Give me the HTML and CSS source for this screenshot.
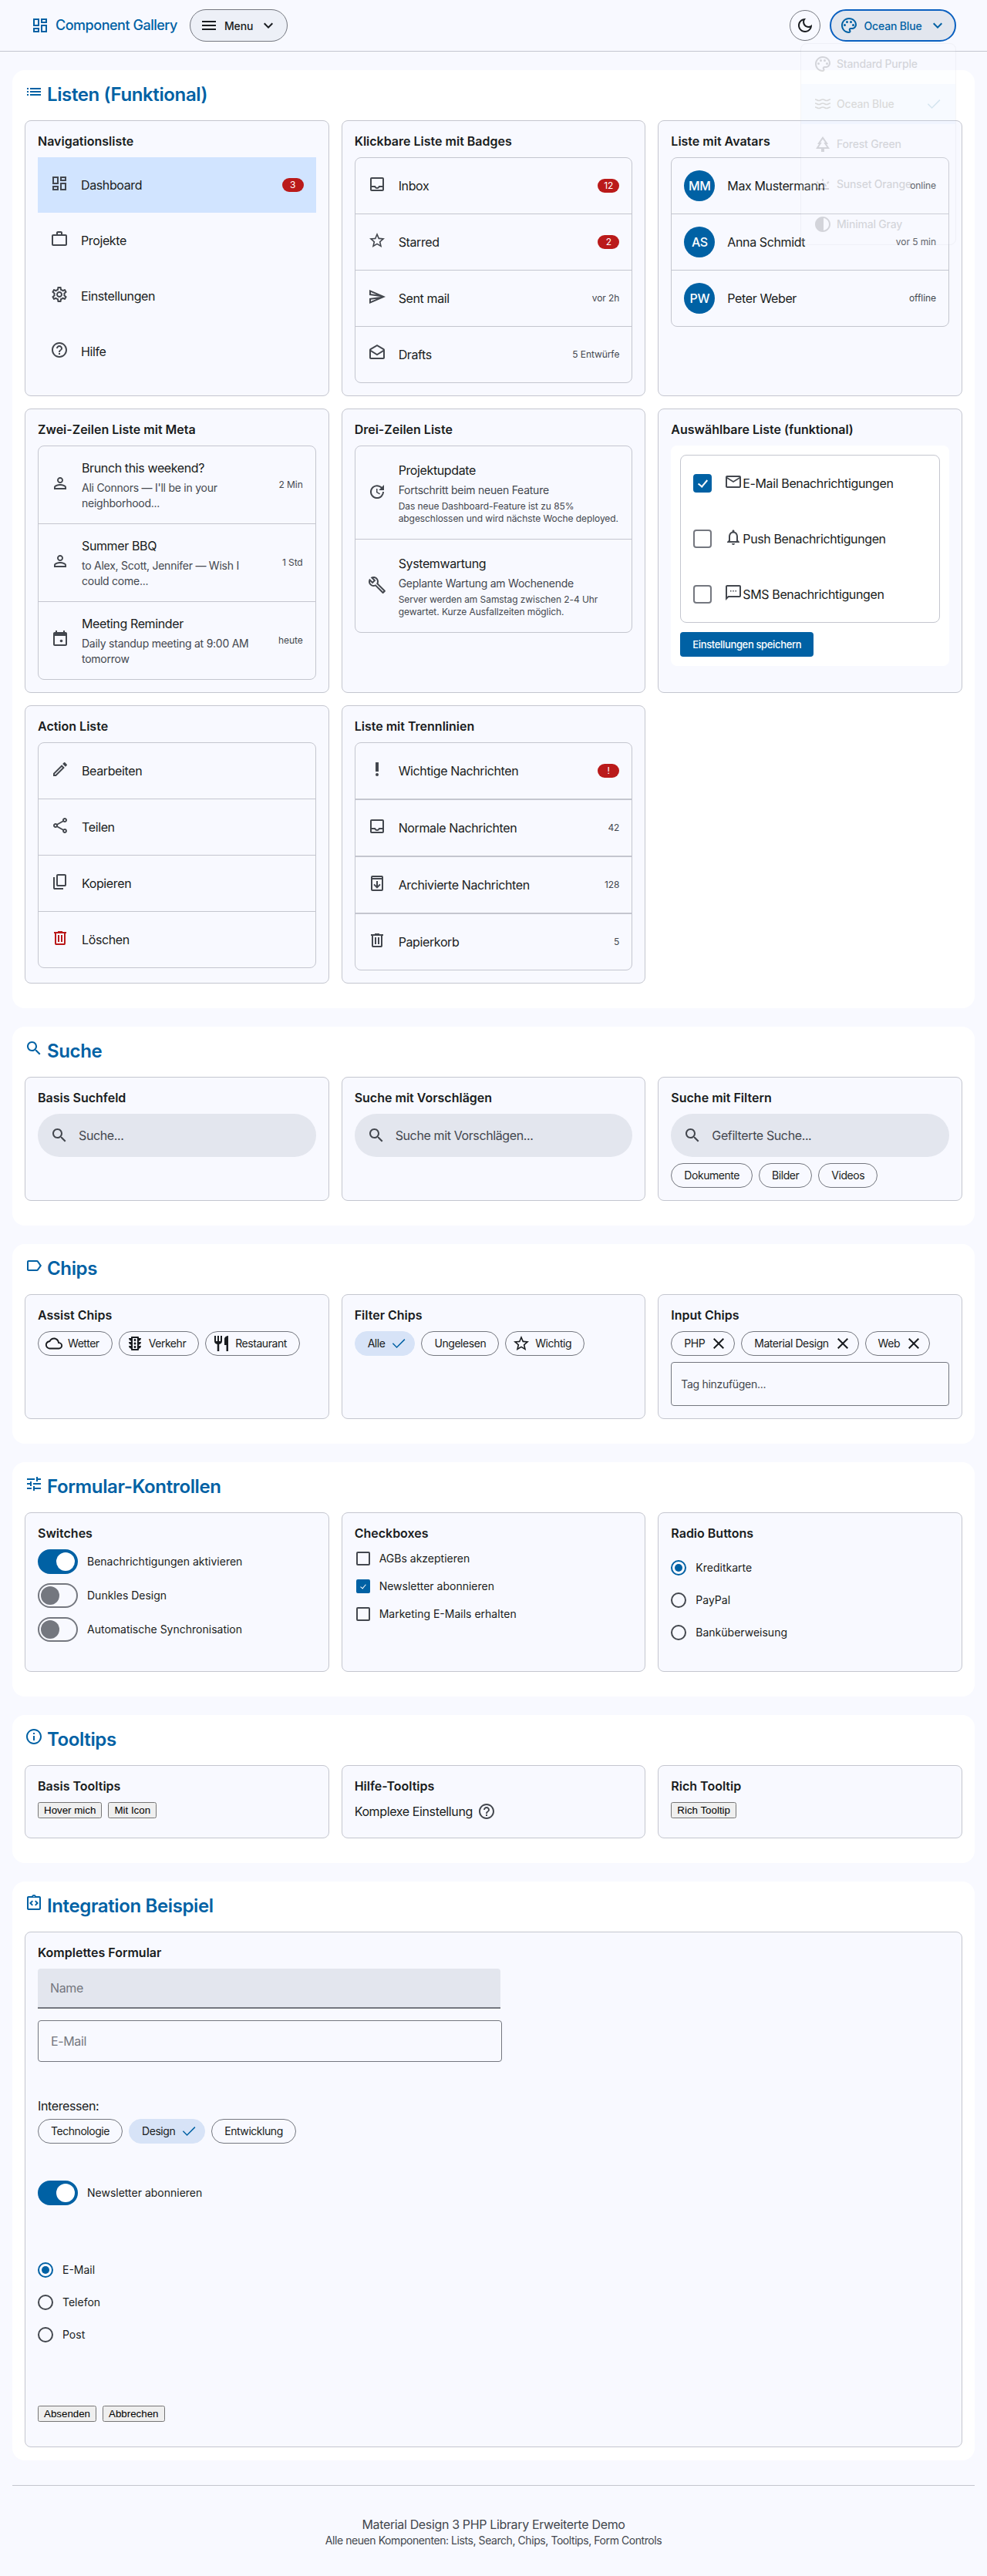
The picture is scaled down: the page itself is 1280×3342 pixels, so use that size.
FILE: index.html
```html
<!DOCTYPE html>
<html lang="de">
<head>
    <meta charset="UTF-8">
    <meta name="viewport" content="width=device-width, initial-scale=1.0">
    <title>Component Gallery</title>
    <link rel="stylesheet" href="styles.css">
</head>
<body>

    <!-- Icon sprite -->
    <svg class="sprite" xmlns="http://www.w3.org/2000/svg">
        <symbol id="i-dashboard" viewBox="0 0 24 24"><path d="M19 5v2h-4V5h4M9 5v6H5V5h4m10 8v6h-4v-6h4M9 17v2H5v-2h4M21 3h-8v6h8V3zM11 3H3v10h8V3zm10 8h-8v10h8V11zm-10 4H3v6h8v-6z"/></symbol>
        <symbol id="i-menu" viewBox="0 0 24 24"><path d="M3 18h18v-2H3v2zm0-5h18v-2H3v2zm0-7v2h18V6H3z"/></symbol>
        <symbol id="i-chevron" viewBox="0 0 24 24"><path d="M16.59 8.59L12 13.17 7.41 8.59 6 10l6 6 6-6z"/></symbol>
        <symbol id="i-moon" viewBox="0 0 24 24"><path d="M9.37 5.51C9.19 6.15 9.1 6.82 9.1 7.5c0 4.08 3.32 7.4 7.4 7.4.68 0 1.35-.09 1.99-.27C17.45 17.19 14.93 19 12 19c-3.86 0-7-3.14-7-7 0-2.93 1.81-5.45 4.37-6.49zM12 3c-4.97 0-9 4.03-9 9s4.03 9 9 9 9-4.03 9-9c0-.46-.04-.92-.1-1.36-.98 1.37-2.58 2.26-4.4 2.26-2.98 0-5.4-2.42-5.4-5.4 0-1.81.89-3.42 2.26-4.4-.44-.06-.9-.1-1.36-.1z"/></symbol>
        <symbol id="i-palette" viewBox="0 0 24 24"><path d="M12 22C6.49 22 2 17.51 2 12S6.49 2 12 2s10 4.04 10 9c0 3.31-2.69 6-6 6h-1.77c-.28 0-.5.22-.5.5 0 .12.05.23.13.33.41.47.64 1.06.64 1.67 0 1.38-1.12 2.5-2.5 2.5zm0-18c-4.41 0-8 3.59-8 8s3.59 8 8 8c.28 0 .5-.22.5-.5 0-.16-.08-.28-.14-.35-.41-.46-.63-1.05-.63-1.65 0-1.38 1.12-2.5 2.5-2.5H16c2.21 0 4-1.79 4-4 0-3.86-3.59-7-8-7z"/><circle cx="6.5" cy="11.5" r="1.5"/><circle cx="9.5" cy="7.5" r="1.5"/><circle cx="14.5" cy="7.5" r="1.5"/><circle cx="17.5" cy="11.5" r="1.5"/></symbol>
        <symbol id="i-waves" viewBox="0 0 24 24"><path d="M2 6c2.5 0 2.5 1.5 5 1.5S9.5 6 12 6s2.5 1.5 5 1.5S19.5 6 22 6M2 11c2.5 0 2.5 1.5 5 1.5S9.5 11 12 11s2.5 1.5 5 1.5 2.5-1.5 5-1.5M2 16c2.5 0 2.5 1.5 5 1.5S9.5 16 12 16s2.5 1.5 5 1.5 2.5-1.5 5-1.5" fill="none" stroke="currentColor" stroke-width="1.6"/></symbol>
        <symbol id="i-park" viewBox="0 0 24 24"><path d="M17 12h2L12 2 5.05 12H7l-3.9 6h6.92v4h3.95v-4H21l-4-6zM6.79 16l3.9-6H8.88l3.13-4.5 3.11 4.5h-1.86l4 6H6.79z"/></symbol>
        <symbol id="i-twilight" viewBox="0 0 24 24"><path d="M16.95 10.23l1.41 1.41 2.12-2.12-1.41-1.41zM4 17h16v2H4zM11 5h2v3h-2zM3.52 9.52l2.12 2.12 1.41-1.41-2.12-2.12zM12 10a5 5 0 0 0-5 5h2a3 3 0 0 1 6 0h2a5 5 0 0 0-5-5z"/></symbol>
        <symbol id="i-contrast" viewBox="0 0 24 24"><path d="M12 22c5.52 0 10-4.48 10-10S17.52 2 12 2 2 6.48 2 12s4.48 10 10 10zm1-17.93c3.94.49 7 3.85 7 7.93s-3.05 7.44-7 7.93V4.07z"/></symbol>
        <symbol id="i-check" viewBox="0 0 24 24"><path d="M9.55 18l-5.7-5.7 1.05-1.05 4.65 4.65 9.8-9.8 1.05 1.05z"/></symbol>
        <symbol id="i-inbox" viewBox="0 0 24 24"><path d="M19 3H5c-1.1 0-2 .9-2 2v14c0 1.1.9 2 2 2h14c1.1 0 2-.9 2-2V5c0-1.1-.9-2-2-2zm0 16H5v-3h3.56c.69 1.19 1.97 2 3.45 2s2.75-.81 3.45-2H19v3zm0-5h-4.99c0 1.1-.9 2-2 2s-2-.9-2-2H5V5h14v9z"/></symbol>
        <symbol id="i-star" viewBox="0 0 24 24"><path d="M22 9.24l-7.19-.62L12 2 9.19 8.63 2 9.24l5.46 4.73L5.82 21 12 17.27 18.18 21l-1.63-7.03L22 9.24zM12 15.4l-3.76 2.27 1-4.28-3.32-2.88 4.38-.38L12 6.1l1.71 4.04 4.38.38-3.32 2.88 1 4.28L12 15.4z"/></symbol>
        <symbol id="i-send" viewBox="0 0 24 24"><path d="M4.01 6.03l7.51 3.22-7.52-1 .01-2.22m7.5 8.72L4 17.97v-2.22l7.51-1M2.01 3L2 10l15 2-15 2 .01 7L23 12 2.01 3z"/></symbol>
        <symbol id="i-drafts" viewBox="0 0 24 24"><path d="M21.99 8c0-.72-.37-1.35-.94-1.7L12 1 2.95 6.3C2.38 6.65 2 7.28 2 8v10c0 1.1.9 2 2 2h16c1.1 0 2-.9 2-2l-.01-10zM12 3.32L19.99 8v.01L12 13 4 8l8-4.68zM4 18v-7.66l8 5.02 7.99-4.99L20 18H4z"/></symbol>
        <symbol id="i-work" viewBox="0 0 24 24"><path d="M20 6h-4V4c0-1.11-.89-2-2-2h-4c-1.11 0-2 .89-2 2v2H4c-1.11 0-1.99.89-1.99 2L2 19c0 1.11.89 2 2 2h16c1.11 0 2-.89 2-2V8c0-1.11-.89-2-2-2zm-6 0h-4V4h4v2zm6 13H4V8h16v11z"/></symbol>
        <symbol id="i-settings" viewBox="0 0 24 24"><path d="M19.43 12.98c.04-.32.07-.64.07-.98 0-.34-.03-.66-.07-.98l2.11-1.65c.19-.15.24-.42.12-.64l-2-3.46c-.09-.16-.26-.25-.44-.25-.06 0-.12.01-.17.03l-2.49 1c-.52-.4-1.08-.73-1.69-.98l-.38-2.65C14.46 2.18 14.25 2 14 2h-4c-.25 0-.46.18-.49.42l-.38 2.65c-.61.25-1.17.59-1.69.98l-2.49-1c-.06-.02-.12-.03-.18-.03-.17 0-.34.09-.43.25l-2 3.46c-.13.22-.07.49.12.64l2.11 1.65c-.04.32-.07.65-.07.98 0 .33.03.66.07.98l-2.11 1.65c-.19.15-.24.42-.12.64l2 3.46c.09.16.26.25.44.25.06 0 .12-.01.17-.03l2.49-1c.52.4 1.08.73 1.69.98l.38 2.65c.03.24.24.42.49.42h4c.25 0 .46-.18.49-.42l.38-2.65c.61-.25 1.17-.59 1.69-.98l2.49 1c.06.02.12.03.18.03.17 0 .34-.09.43-.25l2-3.46c.12-.22.07-.49-.12-.64l-2.11-1.65zm-1.98-1.71c.04.31.05.52.05.73 0 .21-.02.43-.05.73l-.14 1.13.89.7 1.08.84-.7 1.21-1.27-.51-1.04-.42-.9.68c-.43.32-.84.56-1.25.73l-1.06.43-.16 1.13-.2 1.35h-1.4l-.19-1.35-.16-1.13-1.06-.43c-.43-.18-.83-.41-1.23-.71l-.91-.7-1.06.43-1.27.51-.7-1.21 1.08-.84.89-.7-.14-1.13c-.03-.31-.05-.54-.05-.74s.02-.43.05-.73l.14-1.13-.89-.7-1.08-.84.7-1.21 1.27.51 1.04.42.9-.68c.43-.32.84-.56 1.25-.73l1.06-.43.16-1.13.2-1.35h1.39l.19 1.35.16 1.13 1.06.43c.43.18.83.41 1.23.71l.91.7 1.06-.43 1.27-.51.7 1.21-1.07.85-.89.7.14 1.13zM12 8c-2.21 0-4 1.79-4 4s1.79 4 4 4 4-1.79 4-4-1.79-4-4-4zm0 6c-1.1 0-2-.9-2-2s.9-2 2-2 2 .9 2 2-.9 2-2 2z"/></symbol>
        <symbol id="i-help" viewBox="0 0 24 24"><path d="M11 18h2v-2h-2v2zm1-16C6.48 2 2 6.48 2 12s4.48 10 10 10 10-4.48 10-10S17.52 2 12 2zm0 18c-4.41 0-8-3.59-8-8s3.59-8 8-8 8 3.59 8 8-3.59 8-8 8zm0-14c-2.21 0-4 1.79-4 4h2c0-1.1.9-2 2-2s2 .9 2 2c0 2-3 1.75-3 5h2c0-2.25 3-2.5 3-5 0-2.21-1.79-4-4-4z"/></symbol>
        <symbol id="i-person" viewBox="0 0 24 24"><path d="M12 5.9c1.16 0 2.1.94 2.1 2.1s-.94 2.1-2.1 2.1S9.9 9.16 9.9 8s.94-2.1 2.1-2.1m0 9c2.97 0 6.1 1.46 6.1 2.1v1.1H5.9V17c0-.64 3.13-2.1 6.1-2.1M12 4C9.79 4 8 5.79 8 8s1.79 4 4 4 4-1.79 4-4-1.79-4-4-4zm0 9c-2.67 0-8 1.34-8 4v3h16v-3c0-2.66-5.33-4-8-4z"/></symbol>
        <symbol id="i-event" viewBox="0 0 24 24"><path d="M16 1v2H8V1H6v2H5c-1.11 0-1.99.9-1.99 2L3 19c0 1.1.89 2 2 2h14c1.1 0 2-.9 2-2V5c0-1.1-.9-2-2-2h-1V1h-2zm3 18H5V8h14v11z"/><circle cx="13.5" cy="14.5" r="1.8"/></symbol>
        <symbol id="i-update" viewBox="0 0 24 24"><path d="M21 10.12h-6.78l2.74-2.82c-2.73-2.7-7.15-2.8-9.88-.1-2.73 2.71-2.73 7.08 0 9.79s7.15 2.71 9.88 0C18.32 15.65 19 14.08 19 12.1h2c0 1.98-.88 4.55-2.64 6.29-3.51 3.48-9.21 3.48-12.72 0-3.5-3.47-3.53-9.11-.02-12.58s9.14-3.47 12.65 0L21 3v7.12zM12.5 8v4.25l3.5 2.08-.72 1.21L11 13V8h1.5z"/></symbol>
        <symbol id="i-build" viewBox="0 0 24 24"><path d="M22.61 18.99l-9.08-9.08c.93-2.34.45-5.1-1.44-7C9.79.61 6.21.4 3.66 2.25L7.5 6.1 6.08 7.5 2.25 3.66C.4 6.21.61 9.79 2.91 12.09c1.86 1.86 4.57 2.35 6.89 1.48l9.11 9.11c.39.39 1.02.39 1.41 0l2.3-2.3c.4-.38.4-1.01-.01-1.39zm-3 1.6l-9.46-9.46c-.61.45-1.29.72-2 .82-1.36.2-2.79-.21-3.83-1.25C3.37 9.76 2.93 8.5 3 7.26l3.09 3.09 4.24-4.24-3.09-3.09c1.24-.07 2.49.37 3.44 1.31 1.08 1.08 1.49 2.57 1.24 3.96-.12.71-.42 1.37-.88 1.96l9.45 9.45-.88.88z"/></symbol>
        <symbol id="i-mail" viewBox="0 0 24 24"><path d="M22 6c0-1.1-.9-2-2-2H4c-1.1 0-2 .9-2 2v12c0 1.1.9 2 2 2h16c1.1 0 2-.9 2-2V6zm-2 0l-8 5-8-5h16zm0 12H4V8l8 5 8-5v10z"/></symbol>
        <symbol id="i-bell" viewBox="0 0 24 24"><path d="M12 22c1.1 0 2-.9 2-2h-4c0 1.1.9 2 2 2zm6-6v-5c0-3.07-1.63-5.64-4.5-6.32V4c0-.83-.67-1.5-1.5-1.5s-1.5.67-1.5 1.5v.68C7.64 5.36 6 7.92 6 11v5l-2 2v1h16v-1l-2-2zm-2 1H8v-6c0-2.48 1.51-4.5 4-4.5s4 2.02 4 4.5v6z"/></symbol>
        <symbol id="i-sms" viewBox="0 0 24 24"><path d="M20 2H4c-1.1 0-1.99.9-1.99 2L2 22l4-4h14c1.1 0 2-.9 2-2V4c0-1.1-.9-2-2-2zm0 14H5.17L4 17.17V4h16v12zM8 9h1.5v1.5H8zm6.5 0H16v1.5h-1.5zm-3.25 0h1.5v1.5h-1.5z"/></symbol>
        <symbol id="i-edit" viewBox="0 0 24 24"><path d="M14.06 9.02l.92.92L5.92 19H5v-.92l9.06-9.06M17.66 3c-.25 0-.51.1-.7.29l-1.83 1.83 3.75 3.75 1.83-1.83c.39-.39.39-1.02 0-1.41l-2.34-2.34c-.2-.2-.45-.29-.71-.29zm-3.6 3.19L3 17.25V21h3.75L17.81 9.94l-3.75-3.75z"/></symbol>
        <symbol id="i-share" viewBox="0 0 24 24"><path d="M18 16.08c-.76 0-1.44.3-1.96.77L8.91 12.7c.05-.23.09-.46.09-.7s-.04-.47-.09-.7l7.05-4.11c.54.5 1.25.81 2.04.81 1.66 0 3-1.34 3-3s-1.34-3-3-3-3 1.34-3 3c0 .24.04.47.09.7L8.04 9.81C7.5 9.31 6.79 9 6 9c-1.66 0-3 1.34-3 3s1.34 3 3 3c.79 0 1.5-.31 2.04-.81l7.12 4.16c-.05.21-.08.43-.08.65 0 1.61 1.31 2.92 2.92 2.92s2.92-1.31 2.92-2.92-1.31-2.92-2.92-2.92zM18 4c.55 0 1 .45 1 1s-.45 1-1 1-1-.45-1-1 .45-1 1-1zM6 13c-.55 0-1-.45-1-1s.45-1 1-1 1 .45 1 1-.45 1-1 1zm12 7.02c-.55 0-1-.45-1-1s.45-1 1-1 1 .45 1 1-.45 1-1 1z"/></symbol>
        <symbol id="i-copy" viewBox="0 0 24 24"><path d="M9 18q-.825 0-1.412-.587Q7 16.825 7 16V4q0-.825.588-1.413Q8.175 2 9 2h9q.825 0 1.413.587Q20 3.175 20 4v12q0 .825-.587 1.413Q18.825 18 18 18zm0-2h9V4H9zm-4 6q-.825 0-1.412-.587Q3 20.825 3 20V6h2v14h11v2z"/></symbol>
        <symbol id="i-delete" viewBox="0 0 24 24"><path d="M7 21q-.825 0-1.412-.587Q5 19.825 5 19V6H4V4h5V3h6v1h5v2h-1v13q0 .825-.587 1.413Q17.825 21 17 21ZM17 6H7v13h10ZM9 17h2V8H9Zm4 0h2V8h-2Z"/></symbol>
        <symbol id="i-priority" viewBox="0 0 24 24"><circle cx="12" cy="19" r="2"/><path d="M10 3h4v12h-4z"/></symbol>
        <symbol id="i-archive" viewBox="0 0 24 24"><path d="M6 2h12q2 0 2 2v16q0 2-2 2H6q-2 0-2-2V4q0-2 2-2zm0 2v1h12V4zm0 3v13h12V7zm5 2h2v6l2.3-2.3 1.4 1.4L12 18.8l-4.7-4.7 1.4-1.4L11 15z"/></symbol>
        <symbol id="i-search" viewBox="0 0 24 24"><path d="M15.5 14h-.79l-.28-.27C15.41 12.59 16 11.11 16 9.5 16 5.91 13.09 3 9.5 3S3 5.91 3 9.5 5.91 16 9.5 16c1.61 0 3.09-.59 4.23-1.57l.27.28v.79l5 4.99L20.49 19l-4.99-5zm-6 0C7.01 14 5 11.99 5 9.5S7.01 5 9.5 5 14 7.01 14 9.5 11.99 14 9.5 14z"/></symbol>
        <symbol id="i-label" viewBox="0 0 24 24"><path d="M17.63 5.84C17.27 5.33 16.67 5 16 5L5 5.01C3.9 5.01 3 5.9 3 7v10c0 1.1.9 1.99 2 1.99L16 19c.67 0 1.27-.33 1.63-.84L22 12l-4.37-6.16zM16 17H5V7h11l3.55 5L16 17z"/></symbol>
        <symbol id="i-tune" viewBox="0 0 24 24"><path d="M3 17v2h6v-2H3zM3 5v2h10V5H3zm10 16v-2h8v-2h-8v-2h-2v6h2zM7 9v2H3v2h4v2h2V9H7zm14 4v-2H11v2h10zm-6-4h2V7h4V5h-4V3h-2v6z"/></symbol>
        <symbol id="i-list" viewBox="0 0 24 24"><path d="M3 13h2v-2H3v2zm0 4h2v-2H3v2zm0-8h2V7H3v2zm4 4h14v-2H7v2zm0 4h14v-2H7v2zM7 7v2h14V7H7z"/></symbol>
        <symbol id="i-info" viewBox="0 0 24 24"><path d="M11 7h2v2h-2zm0 4h2v6h-2zm1-9C6.48 2 2 6.48 2 12s4.48 10 10 10 10-4.48 10-10S17.52 2 12 2zm0 18c-4.41 0-8-3.59-8-8s3.59-8 8-8 8 3.59 8 8-3.59 8-8 8z"/></symbol>
        <symbol id="i-code" viewBox="0 0 24 24"><path d="M11 14.17L8.83 12 11 9.83 9.59 8.41 6 12l3.59 3.59zM14.41 15.59L18 12l-3.59-3.59L13 9.83 15.17 12 13 14.17zM19 3h-4.18C14.4 1.84 13.3 1 12 1s-2.4.84-2.82 2H5c-.14 0-.27.01-.4.04-.39.08-.74.28-1.01.55-.18.18-.33.4-.43.64-.1.23-.16.49-.16.77v14c0 .27.06.54.16.78s.25.45.43.64c.27.27.62.47 1.01.55.13.02.26.03.4.03h14c1.1 0 2-.9 2-2V5c0-1.1-.9-2-2-2zm-7-.25c.41 0 .75.34.75.75s-.34.75-.75.75-.75-.34-.75-.75.34-.75.75-.75zM19 19H5V5h14v14z"/></symbol>
        <symbol id="i-cloud" viewBox="-1 -1 26 26"><path d="M12 6c2.62 0 4.88 1.86 5.39 4.43l.3 1.5 1.53.11c1.56.1 2.78 1.41 2.78 2.96 0 1.65-1.35 3-3 3H6c-2.21 0-4-1.79-4-4 0-2.05 1.53-3.76 3.56-3.97l1.07-.11.5-.95C8.08 7.14 9.94 6 12 6m0-2C9.11 4 6.6 5.64 5.35 8.04 2.34 8.36 0 10.91 0 14c0 3.31 2.69 6 6 6h13c2.76 0 5-2.24 5-5 0-2.64-2.05-4.78-4.65-4.96C18.67 6.59 15.64 4 12 4z"/></symbol>
        <symbol id="i-traffic" viewBox="0 0 24 24"><path d="M20 10h-3V8.86c1.72-.45 3-2 3-3.86h-3V4c0-.55-.45-1-1-1H8c-.55 0-1 .45-1 1v1H4c0 1.86 1.28 3.41 3 3.86V10H4c0 1.86 1.28 3.41 3 3.86V15H4c0 1.86 1.28 3.41 3 3.86V20c0 .55.45 1 1 1h8c.55 0 1-.45 1-1v-1.14c1.72-.45 3-2 3-3.86h-3v-1.14c1.72-.45 3-2 3-3.86zm-5 9H9V5h6v14zm-3-1c.83 0 1.5-.67 1.5-1.5S12.83 15 12 15s-1.5.67-1.5 1.5.67 1.5 1.5 1.5zm0-4.5c.83 0 1.5-.67 1.5-1.5s-.67-1.5-1.5-1.5-1.5.67-1.5 1.5.67 1.5 1.5 1.5zM12 9c.83 0 1.5-.67 1.5-1.5S12.83 6 12 6s-1.5.67-1.5 1.5S11.17 9 12 9z"/></symbol>
        <symbol id="i-restaurant" viewBox="0 0 24 24"><path d="M11 9H9V2H7v7H5V2H3v7c0 2.12 1.66 3.84 3.75 3.97V22h2.5v-9.03C11.34 12.84 13 11.12 13 9V2h-2v7zm5-3v8h2.5v8H21V2c-2.76 0-5 2.24-5 4z"/></symbol>
        <symbol id="i-close" viewBox="0 0 24 24"><path d="M19 6.41L17.59 5 12 10.59 6.41 5 5 6.41 10.59 12 5 17.59 6.41 19 12 13.41 17.59 19 19 17.59 13.41 12z"/></symbol>
    </svg>

    <header class="topbar">
        <div class="topbar-left">
            <a class="brand" href="#"><svg class="icon"><use href="#i-dashboard"/></svg>Component Gallery</a>
            <button class="pill-btn" type="button">
                <svg class="icon"><use href="#i-menu"/></svg>Menu<svg class="icon"><use href="#i-chevron"/></svg>
            </button>
        </div>
        <div class="topbar-right">
            <button class="round-btn" type="button"><svg class="icon"><use href="#i-moon"/></svg></button>
            <button class="pill-btn theme-btn" type="button">
                <svg class="icon"><use href="#i-palette"/></svg>Ocean Blue<svg class="icon"><use href="#i-chevron"/></svg>
            </button>
            <!-- Theme menu, caught while fading in -->
            <ul class="theme-menu">
                <li><svg class="icon"><use href="#i-palette"/></svg>Standard Purple</li>
                <li class="active"><svg class="icon"><use href="#i-waves"/></svg>Ocean Blue<svg class="icon menu-check"><use href="#i-check"/></svg></li>
                <li><svg class="icon"><use href="#i-park"/></svg>Forest Green</li>
                <li><svg class="icon"><use href="#i-twilight"/></svg>Sunset Orange</li>
                <li><svg class="icon"><use href="#i-contrast"/></svg>Minimal Gray</li>
            </ul>
        </div>
    </header>

    <main>
        <!-- Listen -->
        <section class="section">
            <h2><svg class="icon"><use href="#i-list"/></svg>Listen (Funktional)</h2>
            <div class="grid">
                <div class="card">
                    <h3>Navigationsliste</h3>
                    <ul class="nav-list">
                        <li class="row active"><svg class="icon"><use href="#i-dashboard"/></svg><span>Dashboard</span><span class="badge">3</span></li>
                        <li class="row"><svg class="icon"><use href="#i-work"/></svg><span>Projekte</span></li>
                        <li class="row"><svg class="icon"><use href="#i-settings"/></svg><span>Einstellungen</span></li>
                        <li class="row"><svg class="icon"><use href="#i-help"/></svg><span>Hilfe</span></li>
                    </ul>
                </div>
                <div class="card">
                    <h3>Klickbare Liste mit Badges</h3>
                    <ul class="list">
                        <li class="row"><svg class="icon"><use href="#i-inbox"/></svg><span>Inbox</span><span class="badge">12</span></li>
                        <li class="row"><svg class="icon"><use href="#i-star"/></svg><span>Starred</span><span class="badge">2</span></li>
                        <li class="row"><svg class="icon"><use href="#i-send"/></svg><span>Sent mail</span><span class="meta">vor 2h</span></li>
                        <li class="row"><svg class="icon"><use href="#i-drafts"/></svg><span>Drafts</span><span class="meta">5 Entwürfe</span></li>
                    </ul>
                </div>
                <div class="card">
                    <h3>Liste mit Avatars</h3>
                    <ul class="list">
                        <li class="row"><span class="avatar">MM</span><span>Max Mustermann</span><span class="meta">online</span></li>
                        <li class="row"><span class="avatar">AS</span><span>Anna Schmidt</span><span class="meta">vor 5 min</span></li>
                        <li class="row"><span class="avatar">PW</span><span>Peter Weber</span><span class="meta">offline</span></li>
                    </ul>
                </div>

                <div class="card">
                    <h3>Zwei-Zeilen Liste mit Meta</h3>
                    <ul class="list">
                        <li class="row two-line">
                            <svg class="icon"><use href="#i-person"/></svg>
                            <div class="two-line-text"><div class="line-title">Brunch this weekend?</div><div class="line-sub">Ali Connors — I'll be in your neighborhood...</div></div>
                            <span class="meta">2 Min</span>
                        </li>
                        <li class="row two-line">
                            <svg class="icon"><use href="#i-person"/></svg>
                            <div class="two-line-text"><div class="line-title">Summer BBQ</div><div class="line-sub">to Alex, Scott, Jennifer — Wish I could come...</div></div>
                            <span class="meta">1 Std</span>
                        </li>
                        <li class="row two-line">
                            <svg class="icon"><use href="#i-event"/></svg>
                            <div class="two-line-text"><div class="line-title">Meeting Reminder</div><div class="line-sub">Daily standup meeting at 9:00 AM tomorrow</div></div>
                            <span class="meta">heute</span>
                        </li>
                    </ul>
                </div>
                <div class="card">
                    <h3>Drei-Zeilen Liste</h3>
                    <ul class="list">
                        <li class="row three-line">
                            <svg class="icon"><use href="#i-update"/></svg>
                            <div><div class="line-title">Projektupdate</div><div class="line-sub">Fortschritt beim neuen Feature</div><div class="line-small">Das neue Dashboard-Feature ist zu 85% abgeschlossen und wird nächste Woche deployed.</div></div>
                        </li>
                        <li class="row three-line">
                            <svg class="icon"><use href="#i-build"/></svg>
                            <div><div class="line-title">Systemwartung</div><div class="line-sub">Geplante Wartung am Wochenende</div><div class="line-small">Server werden am Samstag zwischen 2-4 Uhr gewartet. Kurze Ausfallzeiten möglich.</div></div>
                        </li>
                    </ul>
                </div>
                <div class="card">
                    <h3>Auswählbare Liste (funktional)</h3>
                    <form class="select-panel">
                        <ul class="list plain">
                            <li class="row select-row"><input class="box-lg" type="checkbox" checked><svg class="icon"><use href="#i-mail"/></svg><span>E-Mail Benachrichtigungen</span></li>
                            <li class="row select-row"><input class="box-lg" type="checkbox"><svg class="icon"><use href="#i-bell"/></svg><span>Push Benachrichtigungen</span></li>
                            <li class="row select-row"><input class="box-lg" type="checkbox"><svg class="icon"><use href="#i-sms"/></svg><span>SMS Benachrichtigungen</span></li>
                        </ul>
                        <button class="btn-filled" type="button">Einstellungen speichern</button>
                    </form>
                </div>

                <div class="card">
                    <h3>Action Liste</h3>
                    <ul class="list">
                        <li class="row"><svg class="icon"><use href="#i-edit"/></svg><span>Bearbeiten</span></li>
                        <li class="row"><svg class="icon"><use href="#i-share"/></svg><span>Teilen</span></li>
                        <li class="row"><svg class="icon"><use href="#i-copy"/></svg><span>Kopieren</span></li>
                        <li class="row"><svg class="icon danger"><use href="#i-delete"/></svg><span>Löschen</span></li>
                    </ul>
                </div>
                <div class="card">
                    <h3>Liste mit Trennlinien</h3>
                    <ul class="list thick">
                        <li class="row"><svg class="icon"><use href="#i-priority"/></svg><span>Wichtige Nachrichten</span><span class="badge">!</span></li>
                        <li class="row"><svg class="icon"><use href="#i-inbox"/></svg><span>Normale Nachrichten</span><span class="meta">42</span></li>
                        <li class="row"><svg class="icon"><use href="#i-archive"/></svg><span>Archivierte Nachrichten</span><span class="meta">128</span></li>
                        <li class="row"><svg class="icon"><use href="#i-delete"/></svg><span>Papierkorb</span><span class="meta">5</span></li>
                    </ul>
                </div>
            </div>
        </section>

        <!-- Suche -->
        <section class="section">
            <h2><svg class="icon"><use href="#i-search"/></svg>Suche</h2>
            <div class="grid">
                <div class="card">
                    <h3>Basis Suchfeld</h3>
                    <div class="search"><svg class="icon"><use href="#i-search"/></svg><input type="text" placeholder="Suche..."></div>
                </div>
                <div class="card">
                    <h3>Suche mit Vorschlägen</h3>
                    <div class="search"><svg class="icon"><use href="#i-search"/></svg><input type="text" placeholder="Suche mit Vorschlägen..."></div>
                </div>
                <div class="card">
                    <h3>Suche mit Filtern</h3>
                    <div class="search"><svg class="icon"><use href="#i-search"/></svg><input type="text" placeholder="Gefilterte Suche..."></div>
                    <div class="chips after-search">
                        <span class="chip">Dokumente</span>
                        <span class="chip">Bilder</span>
                        <span class="chip">Videos</span>
                    </div>
                </div>
            </div>
        </section>

        <!-- Chips -->
        <section class="section">
            <h2><svg class="icon"><use href="#i-label"/></svg>Chips</h2>
            <div class="grid">
                <div class="card">
                    <h3>Assist Chips</h3>
                    <div class="chips">
                        <span class="chip lead"><svg class="icon"><use href="#i-cloud"/></svg>Wetter</span>
                        <span class="chip lead"><svg class="icon"><use href="#i-traffic"/></svg>Verkehr</span>
                        <span class="chip lead"><svg class="icon"><use href="#i-restaurant"/></svg>Restaurant</span>
                    </div>
                </div>
                <div class="card">
                    <h3>Filter Chips</h3>
                    <div class="chips">
                        <span class="chip trail selected">Alle<svg class="icon"><use href="#i-check"/></svg></span>
                        <span class="chip">Ungelesen</span>
                        <span class="chip lead"><svg class="icon"><use href="#i-star"/></svg>Wichtig</span>
                    </div>
                </div>
                <div class="card">
                    <h3>Input Chips</h3>
                    <div class="chips">
                        <span class="chip trail">PHP<svg class="icon"><use href="#i-close"/></svg></span>
                        <span class="chip trail">Material Design<svg class="icon"><use href="#i-close"/></svg></span>
                        <span class="chip trail">Web<svg class="icon"><use href="#i-close"/></svg></span>
                    </div>
                    <input class="tag-input" type="text" placeholder="Tag hinzufügen...">
                </div>
            </div>
        </section>

        <!-- Formular-Kontrollen -->
        <section class="section">
            <h2><svg class="icon"><use href="#i-tune"/></svg>Formular-Kontrollen</h2>
            <div class="grid">
                <div class="card">
                    <h3>Switches</h3>
                    <div class="switches">
                        <label class="check-row"><input class="switch" type="checkbox" checked>Benachrichtigungen aktivieren</label>
                        <label class="check-row"><input class="switch" type="checkbox">Dunkles Design</label>
                        <label class="check-row"><input class="switch" type="checkbox">Automatische Synchronisation</label>
                    </div>
                </div>
                <div class="card">
                    <h3>Checkboxes</h3>
                    <div class="checkboxes">
                        <label class="check-row"><input class="box" type="checkbox">AGBs akzeptieren</label>
                        <label class="check-row"><input class="box" type="checkbox" checked>Newsletter abonnieren</label>
                        <label class="check-row"><input class="box" type="checkbox">Marketing E-Mails erhalten</label>
                    </div>
                </div>
                <div class="card">
                    <h3>Radio Buttons</h3>
                    <div class="radios">
                        <label class="check-row"><input class="radio" type="radio" name="pay" checked>Kreditkarte</label>
                        <label class="check-row"><input class="radio" type="radio" name="pay">PayPal</label>
                        <label class="check-row"><input class="radio" type="radio" name="pay">Banküberweisung</label>
                    </div>
                </div>
            </div>
        </section>

        <!-- Tooltips -->
        <section class="section">
            <h2><svg class="icon"><use href="#i-info"/></svg>Tooltips</h2>
            <div class="grid">
                <div class="card">
                    <h3>Basis Tooltips</h3>
                    <div class="native-btns tip-row">
                        <button type="button">Hover mich</button>
                        <button type="button">Mit Icon</button>
                    </div>
                </div>
                <div class="card">
                    <h3>Hilfe-Tooltips</h3>
                    <div class="help-row">Komplexe Einstellung<svg class="icon"><use href="#i-help"/></svg></div>
                </div>
                <div class="card">
                    <h3>Rich Tooltip</h3>
                    <div class="native-btns tip-row">
                        <button type="button">Rich Tooltip</button>
                    </div>
                </div>
            </div>
        </section>

        <!-- Integration -->
        <section class="section last">
            <h2><svg class="icon"><use href="#i-code"/></svg>Integration Beispiel</h2>
            <div class="card">
                <h3>Komplettes Formular</h3>
                <input class="field-filled" type="text" placeholder="Name">
                <input class="field-outlined" type="email" placeholder="E-Mail">
                <div class="interest-label">Interessen:</div>
                <div class="chips">
                    <span class="chip">Technologie</span>
                    <span class="chip trail selected">Design<svg class="icon"><use href="#i-check"/></svg></span>
                    <span class="chip">Entwicklung</span>
                </div>
                <label class="check-row form-switch"><input class="switch" type="checkbox" checked>Newsletter abonnieren</label>
                <div class="radios form-radios">
                    <label class="check-row"><input class="radio" type="radio" name="contact" checked>E-Mail</label>
                    <label class="check-row"><input class="radio" type="radio" name="contact">Telefon</label>
                    <label class="check-row"><input class="radio" type="radio" name="contact">Post</label>
                </div>
                <div class="native-btns form-btns">
                    <button type="button">Absenden</button>
                    <button type="button">Abbrechen</button>
                </div>
            </div>
        </section>
    </main>

    <footer class="footer">
        <p>Material Design 3 PHP Library Erweiterte Demo</p>
        <p class="small">Alle neuen Komponenten: Lists, Search, Chips, Tooltips, Form Controls</p>
    </footer>

</body>
</html>
```

FILE: styles.css
```css
* {
    box-sizing: border-box;
}
body {
    margin: 0;
    background-color: #f8f9ff;
    color: #191c20;
    font-family: Inter, "Liberation Sans", sans-serif;
    font-size: 16px;
    line-height: 24px;
    letter-spacing: -0.38px;
}
ul {
    list-style: none;
    margin: 0;
    padding: 0;
}
.sprite {
    display: none;
}
.icon {
    width: 24px;
    height: 24px;
    flex: none;
    fill: currentColor;
}

/* Top bar */
.topbar {
    display: flex;
    justify-content: space-between;
    align-items: center;
    height: 67px;
    padding: 0 40px;
    border-bottom: 1px solid #c4c6cf;
}
.topbar-left, .topbar-right {
    display: flex;
    align-items: center;
}
.topbar-left {
    gap: 16px;
}
.topbar-right {
    position: relative;
    gap: 12px;
}
.brand {
    display: flex;
    align-items: center;
    gap: 8px;
    color: #0061a4;
    font-size: 18px;
    font-weight: 500;
    letter-spacing: -0.48px;
    text-decoration: none;
}
.pill-btn {
    display: flex;
    align-items: center;
    gap: 8px;
    height: 42px;
    padding: 0 12px;
    border: 1px solid #74777f;
    border-radius: 21px;
    background-color: #edf0f7;
    color: #191c20;
    font-family: inherit;
    font-size: 14px;
    font-weight: 500;
    letter-spacing: -0.17px;
}
.theme-btn {
    padding: 0 10.5px;
    border: 2px solid #0a60c0;
    background-color: #e2e6ee;
    color: #0061a4;
}
.round-btn {
    display: flex;
    align-items: center;
    justify-content: center;
    width: 40px;
    height: 40px;
    padding: 0;
    border: 1px solid #74777f;
    border-radius: 50%;
    background: none;
    color: #191c20;
}
.theme-menu {
    position: absolute;
    top: 44px;
    right: 0;
    z-index: 10;
    width: 202px;
    border: 1px solid #c4c6cf;
    border-radius: 8px;
    background-color: #f8f9ff;
    font-size: 14px;
    font-weight: 500;
    letter-spacing: -0.2px;
    opacity: 0.16;
}
.theme-menu li {
    display: flex;
    align-items: center;
    gap: 6px;
    height: 52px;
    padding: 0 16px;
}
.theme-menu li.active {
    background-color: #d1e4ff;
}
.menu-check {
    margin-left: auto;
    color: #0061a4;
}

/* Sections */
.section {
    margin: 24px 16px;
    padding: 16px 16px 32px;
    border-radius: 16px;
    background-color: #fff;
}
.section.last {
    padding-bottom: 17px;
}
.section h2 {
    height: 30px;
    margin: 0 0 19px;
    color: #0061a4;
    font-size: 24px;
    font-weight: 600;
    line-height: 30px;
    letter-spacing: -0.37px;
}
.section h2 .icon {
    margin-right: 5px;
}
.grid {
    display: grid;
    grid-template-columns: repeat(3, 1fr);
    gap: 16px;
}
.card {
    padding: 16px;
    border: 1px solid #c4c6cf;
    border-radius: 8px;
    background-color: #f8f9ff;
}
.card h3 {
    margin: 0 0 11px;
    font-size: 16px;
    font-weight: 600;
    line-height: 20px;
    letter-spacing: 0;
}

/* Lists */
.list {
    border: 1px solid #c4c6cf;
    border-radius: 8px;
}
.list .row + .row {
    border-top: 1px solid #c4c6cf;
}
.list.thick .row + .row {
    border-top-width: 2px;
}
.list.plain .row + .row {
    border-top: 0;
}
.row {
    box-sizing: content-box;
    display: flex;
    align-items: center;
    gap: 16px;
    min-height: 72px;
    padding: 0 16px;
}
.row .icon {
    margin-bottom: 4px;
    color: #43474e;
}
.row .icon.danger {
    color: #ba1a1a;
}
.nav-list .row.active {
    background-color: #d1e4ff;
}
.badge {
    min-width: 28px;
    height: 18px;
    margin-left: auto;
    border-radius: 9px;
    background-color: #ba1a1a;
    color: #fff;
    font-size: 12px;
    line-height: 18px;
    letter-spacing: 0;
    text-align: center;
}
.meta {
    flex: none;
    margin-left: auto;
    color: #43474e;
    font-size: 12px;
    line-height: 16px;
    letter-spacing: -0.07px;
}
.avatar {
    width: 40px;
    height: 40px;
    border-radius: 50%;
    background-color: #0061a4;
    color: #fff;
    font-weight: 500;
    line-height: 40px;
    text-align: center;
}
.two-line {
    min-height: 0;
    padding-top: 16px;
    padding-bottom: 16px;
}
.two-line-text {
    max-width: 236px;
}
.three-line {
    min-height: 0;
    padding-top: 19px;
    padding-bottom: 18px;
}
.line-sub {
    margin-top: 4px;
    color: #43474e;
    font-size: 14px;
    line-height: 20px;
    letter-spacing: -0.25px;
}
.line-small {
    margin-top: 3px;
    color: #43474e;
    font-size: 12px;
    line-height: 16px;
    letter-spacing: -0.07px;
}
.select-panel {
    padding: 12px;
    border-radius: 8px;
    background-color: #fff;
}
.select-row {
    gap: 0;
}
.select-row .box-lg {
    margin-right: 16px;
}
.box-lg {
    display: grid;
    place-items: center;
    flex: none;
    appearance: none;
    width: 24px;
    height: 24px;
    margin: 0;
    border: 2px solid #74777f;
    border-radius: 4px;
}
.box-lg:checked {
    border-color: #0061a4;
    background-color: #0061a4;
}
.box-lg:checked::after {
    content: "";
    width: 5px;
    height: 10px;
    margin-top: -2px;
    border: solid #fff;
    border-width: 0 2px 2px 0;
    transform: rotate(40deg);
}
.btn-filled {
    display: block;
    height: 32px;
    margin-top: 12px;
    padding: 0 16px;
    border: 0;
    border-radius: 4px;
    background-color: #0061a4;
    color: #fff;
    font-family: inherit;
    font-size: 13px;
    font-weight: 500;
    letter-spacing: -0.35px;
}

/* Search */
.search {
    display: flex;
    align-items: center;
    gap: 13px;
    height: 56px;
    padding: 0 16px;
    border-radius: 28px;
    background-color: #e3e6ee;
}
.search .icon {
    color: #43474e;
}
.search input {
    flex: 1;
    min-width: 0;
    padding: 0;
    border: 0;
    outline: 0;
    background: none;
    font-family: inherit;
    font-size: 16px;
    letter-spacing: inherit;
}
.search input::placeholder, .tag-input::placeholder {
    color: #43474e;
    opacity: 1;
}

/* Chips */
.chips {
    display: flex;
    flex-wrap: wrap;
    gap: 8px;
}
.chips.after-search {
    margin-top: 8px;
}
.chip {
    display: inline-flex;
    align-items: center;
    gap: 6px;
    height: 32px;
    padding: 0 16px;
    border: 1px solid #74777f;
    border-radius: 16px;
    font-size: 14px;
    letter-spacing: -0.45px;
}
.chip.lead {
    padding-left: 8px;
}
.chip.trail {
    padding-right: 8px;
}
.chip.selected {
    border-color: #d7e3f7;
    background-color: #d7e3f7;
}
.chip.selected .icon {
    color: #0061a4;
}
.tag-input {
    display: block;
    width: 100%;
    height: 57px;
    margin-top: 8px;
    padding: 0 12px;
    border: 1px solid #74777f;
    border-radius: 4px;
    background: none;
    font-family: inherit;
    font-size: 14px;
    letter-spacing: -0.3px;
}

/* Form controls */
.check-row {
    display: flex;
    align-items: center;
    gap: 12px;
    font-size: 14px;
    letter-spacing: 0;
}
.switches {
    display: flex;
    flex-direction: column;
    gap: 12px;
    padding-bottom: 22px;
}
.switch {
    display: flex;
    align-items: center;
    flex: none;
    appearance: none;
    width: 52px;
    height: 32px;
    margin: 0;
    padding: 2px;
    border: 2px solid #74777f;
    border-radius: 16px;
}
.switch::after {
    content: "";
    width: 24px;
    height: 24px;
    border-radius: 50%;
    background-color: #74777f;
}
.switch:checked {
    justify-content: flex-end;
    border-color: #0061a4;
    background-color: #0061a4;
}
.switch:checked::after {
    background-color: #fff;
}
.checkboxes {
    display: flex;
    flex-direction: column;
    gap: 12px;
    padding-left: 2px;
}
.box {
    display: grid;
    place-items: center;
    flex: none;
    appearance: none;
    width: 18px;
    height: 18px;
    margin: 0;
    border: 2px solid #43474e;
    border-radius: 2px;
}
.box:checked {
    border-color: #0061a4;
    background-color: #0061a4;
}
.box:checked::after {
    content: "";
    width: 3px;
    height: 6px;
    margin-top: -1px;
    border: solid #fff;
    border-width: 0 1px 1px 0;
    transform: rotate(40deg);
}
.radios {
    display: flex;
    flex-direction: column;
    gap: 18px;
    padding-top: 12px;
}
.radio {
    display: grid;
    place-items: center;
    flex: none;
    appearance: none;
    width: 20px;
    height: 20px;
    margin: 0;
    border: 2px solid #43474e;
    border-radius: 50%;
}
.radio:checked {
    border-color: #0061a4;
}
.radio:checked::after {
    content: "";
    width: 10px;
    height: 10px;
    border-radius: 50%;
    background-color: #0061a4;
}

/* Tooltips */
.native-btns {
    display: flex;
    gap: 8px;
}
.tip-row {
    padding-bottom: 9px;
}
.help-row {
    display: flex;
    align-items: center;
    gap: 6px;
}
.help-row .icon {
    color: #43474e;
}

/* Integration form */
.field-filled, .field-outlined {
    display: block;
    font-family: inherit;
    font-size: 16px;
    letter-spacing: inherit;
    outline: 0;
}
.field-filled::placeholder, .field-outlined::placeholder {
    color: #74777f;
    opacity: 1;
}
.field-filled {
    width: 600px;
    height: 52px;
    padding: 0 16px;
    border: 0;
    border-bottom: 2px solid #74777f;
    border-radius: 4px 4px 0 0;
    background-color: #e3e6ee;
}
.field-outlined {
    width: 602px;
    height: 54px;
    margin-top: 15px;
    padding: 0 16px;
    border: 1px solid #74777f;
    border-radius: 4px;
    background: none;
}
.interest-label {
    margin: 45px 0 5px;
}
.form-switch {
    margin-top: 48px;
}
.form-radios {
    padding-top: 72px;
}
.form-btns {
    margin-top: 80px;
    padding-bottom: 16px;
}

/* Footer */
.footer {
    margin: 32px 16px 0;
    padding: 38px 0 36px;
    border-top: 1px solid #c4c6cf;
    color: #43474e;
    text-align: center;
}
.footer p {
    margin: 0;
    letter-spacing: -0.35px;
}
.footer .small {
    margin-top: -1px;
    font-size: 14px;
    line-height: 20px;
    letter-spacing: -0.43px;
}
```
